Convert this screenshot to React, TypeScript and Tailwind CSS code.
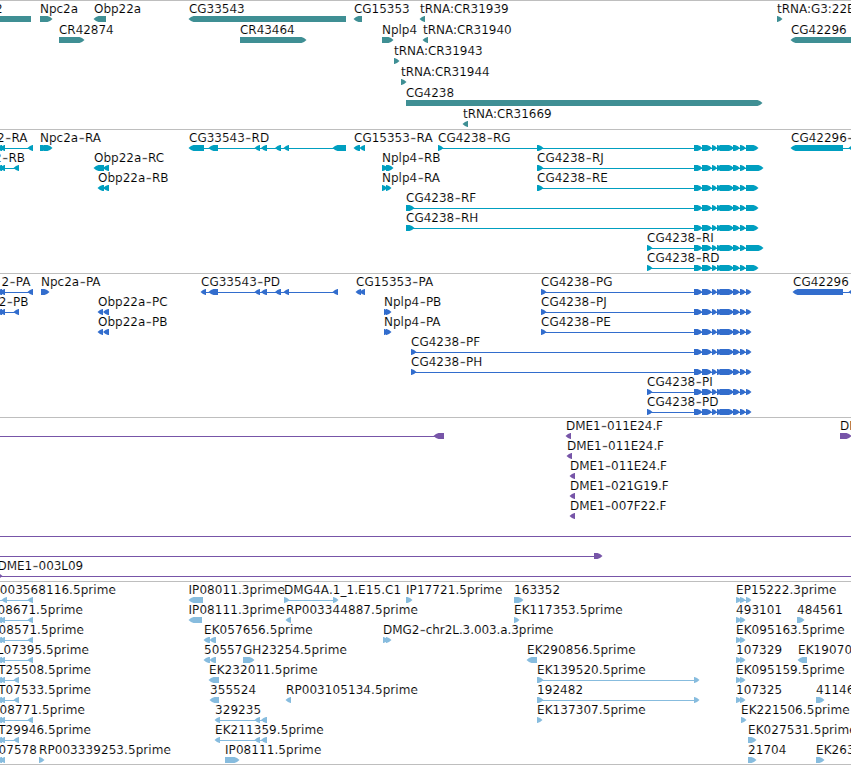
type Dir = "l" | "r";
type Span = [number, number];
// One labelled glyph: row in the track, label and its x, strand, exon blocks and connector line.
type Feature = {
  row: number;
  t?: string;
  x?: number;
  end?: boolean;
  d?: Dir;
  s?: Span[];
  line?: Span;
};
type TrackData = {
  top: number;
  height: number;
  first: number;
  pitch: number;
  color: string;
  spacing: number;
  features: Feature[];
};

const head: Span[] = [[694, 702.5], [702, 712], [712, 717], [717, 721], [719.5, 734], [733, 740], [740, 746]];
const utrShort: Span[] = [...head, [746, 758.5]];
const utrLong: Span[] = [...head, [746, 763.5]];
const coding: Span[] = [...head, [746, 751.5]];

const genes: Feature[] = [
  { row: 0, t: "2", x: 2.5, end: true, d: "r" },
  { row: 0, s: [[-10, 31]] },
  { row: 0, t: "Npc2a", x: 40, d: "r", s: [[40, 52.5]] },
  { row: 0, t: "Obp22a", x: 94, d: "l", s: [[93.5, 106]] },
  { row: 0, t: "CG33543", x: 189, d: "l", s: [[188.5, 346]] },
  { row: 0, t: "CG15353", x: 354, d: "l", s: [[353.5, 362]] },
  { row: 0, t: "tRNA:CR31939", x: 420, d: "l", s: [[419.5, 425]] },
  { row: 0, t: "tRNA:G3:22E", x: 777, d: "r", s: [[777, 782.5]] },
  { row: 1, t: "CR42874", x: 59, d: "r", s: [[59, 84.5]] },
  { row: 1, t: "CR43464", x: 240, d: "r", s: [[240, 306.5]] },
  { row: 1, t: "Nplp4", x: 382, d: "r", s: [[382, 393.5]] },
  { row: 1, t: "tRNA:CR31940", x: 423, d: "l", s: [[422.5, 428]] },
  { row: 1, t: "CG42296", x: 791, d: "l", s: [[790.5, 870]] },
  { row: 2, t: "tRNA:CR31943", x: 394, d: "r", s: [[394, 399.5]] },
  { row: 3, t: "tRNA:CR31944", x: 401, d: "r", s: [[401, 406.5]] },
  { row: 4, t: "CG4238", x: 406, d: "r", s: [[406, 762.5]] },
  { row: 5, t: "tRNA:CR31669", x: 463, d: "l", s: [[462.5, 468]] },
];

const transcripts: Feature[] = [
  { row: 0, t: "2-RA", x: 27.5, end: true, d: "l", line: [0, 31], s: [[-4, 2], [0, 5], [27.5, 33]] },
  { row: 0, t: "Npc2a-RA", x: 40, d: "r", s: [[40, 48], [44, 52.5]] },
  { row: 0, t: "CG33543-RD", x: 189, d: "l", line: [195, 340], s: [[188.5, 204], [208.5, 218], [254.5, 260], [261, 267], [275, 281], [283.5, 289], [332.5, 346]] },
  { row: 0, t: "CG15353-RA", x: 354, d: "l", s: [[353.5, 360], [359.5, 365]] },
  { row: 0, t: "CG4238-RG", x: 438, d: "r", line: [438, 750], s: [[438, 443.5], [537, 543.5], ...utrShort] },
  { row: 0, t: "CG42296-", x: 791, d: "l", line: [840, 851], s: [[790.5, 843], [848.5, 856]] },
  { row: 1, t: "2-RB", x: 25, end: true, d: "l", line: [0, 17], s: [[-4, 2], [0, 5], [13.5, 19]] },
  { row: 1, t: "Obp22a-RC", x: 94, d: "l", s: [[93.5, 104], [103, 109]] },
  { row: 1, t: "Nplp4-RB", x: 382, d: "r", s: [[382, 388], [386, 393.5]] },
  { row: 1, t: "CG4238-RJ", x: 537, d: "r", line: [537, 750], s: [[537, 543.5], ...utrLong] },
  { row: 2, t: "Obp22a-RB", x: 98, d: "l", s: [[97.5, 104], [103, 109]] },
  { row: 2, t: "Nplp4-RA", x: 382, d: "r", s: [[382, 387], [386, 391.5]] },
  { row: 2, t: "CG4238-RE", x: 537, d: "r", line: [537, 750], s: [[537, 543.5], ...utrShort] },
  { row: 3, t: "CG4238-RF", x: 406, d: "r", line: [406, 750], s: [[406, 414.5], ...utrShort] },
  { row: 4, t: "CG4238-RH", x: 406, d: "r", line: [406, 750], s: [[406, 414.5], ...utrShort] },
  { row: 5, t: "CG4238-RI", x: 647, d: "r", line: [647, 750], s: [[647, 652.5], ...utrLong] },
  { row: 6, t: "CG4238-RD", x: 647, d: "r", line: [647, 750], s: [[647, 652.5], ...utrShort] },
];

const proteins: Feature[] = [
  { row: 0, t: "2-PA", x: 30.5, end: true, d: "l", line: [0, 31], s: [[-4, 2], [0, 5], [27.5, 33]] },
  { row: 0, t: "Npc2a-PA", x: 41, d: "r", s: [[41, 49.5]] },
  { row: 0, t: "CG33543-PD", x: 201, d: "l", line: [204, 335], s: [[200.5, 206], [208.5, 218], [254.5, 260], [261, 267], [275, 281], [283.5, 289], [332.5, 338]] },
  { row: 0, t: "CG15353-PA", x: 356, d: "l", s: [[355.5, 361], [359.5, 365]] },
  { row: 0, t: "CG4238-PG", x: 541, d: "r", line: [541, 748], s: [[541, 546.5], ...coding] },
  { row: 0, t: "CG42296", x: 793, d: "l", line: [840, 851], s: [[792.5, 843], [848.5, 856]] },
  { row: 1, t: "2-PB", x: 28.5, end: true, d: "l", line: [0, 17], s: [[-4, 2], [0, 5], [13.5, 19]] },
  { row: 1, t: "Obp22a-PC", x: 98, d: "l", s: [[97.5, 103], [103, 109]] },
  { row: 1, t: "Nplp4-PB", x: 384, d: "r", s: [[384, 388], [386, 391.5]] },
  { row: 1, t: "CG4238-PJ", x: 541, d: "r", line: [541, 748], s: [[541, 546.5], ...coding] },
  { row: 2, t: "Obp22a-PB", x: 98, d: "l", s: [[97.5, 103], [103, 109]] },
  { row: 2, t: "Nplp4-PA", x: 384, d: "r", s: [[384, 388], [386, 391.5]] },
  { row: 2, t: "CG4238-PE", x: 541, d: "r", line: [541, 748], s: [[541, 546.5], ...coding] },
  { row: 3, t: "CG4238-PF", x: 411, d: "r", line: [411, 748], s: [[411, 416.5], ...coding] },
  { row: 4, t: "CG4238-PH", x: 411, d: "r", line: [411, 748], s: [[411, 416.5], ...coding] },
  { row: 5, t: "CG4238-PI", x: 647, d: "r", line: [647, 748], s: [[647, 652.5], ...coding] },
  { row: 6, t: "CG4238-PD", x: 647, d: "r", line: [647, 748], s: [[647, 652.5], ...coding] },
];

const clones: Feature[] = [
  { row: 0, d: "l", line: [0, 440], s: [[433.5, 444]] },
  { row: 0, t: "DME1-011E24.F", x: 566, d: "l", s: [[565.5, 571]] },
  { row: 0, t: "DME1", x: 840, d: "r", s: [[840, 851.5]] },
  { row: 1, t: "DME1-011E24.F", x: 567, d: "l", s: [[566.5, 572]] },
  { row: 2, t: "DME1-011E24.F", x: 570, d: "l", s: [[569.5, 575]] },
  { row: 3, t: "DME1-021G19.F", x: 570, d: "l", s: [[569.5, 575]] },
  { row: 4, t: "DME1-007F22.F", x: 570, d: "l", s: [[569.5, 575]] },
  { row: 5, line: [0, 851] },
  { row: 6, d: "r", line: [0, 598], s: [[594, 602.5]] },
  { row: 7, t: "DME1-003L09", x: 83, end: true, d: "r", line: [0, 851], s: [[-3, 2.5]] },
];

const pair: Span[] = [[736, 741.5], [740, 745.5]];
const edge: Span[] = [[-4, 2], [0, 5]];
const ests: Feature[] = [
  { row: 0, t: "003568116.5prime", x: 116, end: true, d: "l", line: [0, 31], s: [[1.5, 7], [27.5, 33]] },
  { row: 0, t: "IP08011.3prime", x: 188.5, d: "l", s: [[188.5, 203]] },
  { row: 0, t: "DMG4A.1_1.E15.C1", x: 284, d: "r", line: [284, 336], s: [[284, 289.5], [333, 338.5]] },
  { row: 0, t: "IP17721.5prime", x: 406, d: "r", s: [[406, 412.5]] },
  { row: 0, t: "163352", x: 514, d: "r", s: [[514, 523.5]] },
  { row: 0, t: "EP15222.3prime", x: 736, d: "r", s: [...pair, [746, 751.5]], line: [736, 748] },
  { row: 1, t: "08671.5prime", x: 83, end: true, d: "l", line: [0, 31], s: [...edge, [27.5, 33]] },
  { row: 1, t: "IP08111.3prime", x: 188.5, d: "l", s: [[188.5, 202]] },
  { row: 1, t: "RP003344887.5prime", x: 286, d: "l", s: [[285.5, 291]] },
  { row: 1, t: "EK117353.5prime", x: 514, d: "r", s: [[514, 519.5]] },
  { row: 1, t: "493101", x: 736, d: "r", s: pair },
  { row: 1, t: "484561", x: 797, d: "r", s: [[797, 804.5]] },
  { row: 2, t: "08571.5prime", x: 84, end: true, d: "l", line: [0, 31], s: [...edge, [27.5, 33]] },
  { row: 2, t: "EK057656.5prime", x: 204, d: "l", s: [[203.5, 210], [209.5, 216]] },
  { row: 2, t: "DMG2-chr2L.3.003.a.3prime", x: 383, d: "r", s: [[383, 388], [386, 391.5]] },
  { row: 2, t: "EK095163.5prime", x: 736, d: "r", s: pair },
  { row: 3, t: "L07395.5prime", x: 89, end: true, d: "l", line: [0, 31], s: [...edge, [27.5, 33]] },
  { row: 3, t: "50557", x: 204, d: "l", s: [[203.5, 210], [209.5, 216]] },
  { row: 3, t: "GH23254.5prime", x: 243, d: "r", s: [[243, 254.5]] },
  { row: 3, t: "EK290856.5prime", x: 527, d: "l", s: [[526.5, 537]] },
  { row: 3, t: "107329", x: 736, d: "r", s: pair },
  { row: 3, t: "EK19070", x: 798, d: "l", s: [[797.5, 807]] },
  { row: 4, t: "T25508.5prime", x: 91, end: true, d: "l", line: [0, 17], s: [...edge, [13.5, 19]] },
  { row: 4, t: "EK232011.5prime", x: 209, d: "l", s: [[208.5, 219]] },
  { row: 4, t: "EK139520.5prime", x: 537, d: "r", line: [537, 696], s: [[537, 543.5], [694, 699.5]] },
  { row: 4, t: "EK095159.5prime", x: 736, d: "r", s: pair },
  { row: 5, t: "T07533.5prime", x: 91, end: true, d: "l", line: [0, 17], s: [...edge, [13.5, 19]] },
  { row: 5, t: "355524", x: 210, d: "l", s: [[209.5, 219]] },
  { row: 5, t: "RP003105134.5prime", x: 286, d: "l", s: [[285.5, 291]] },
  { row: 5, t: "192482", x: 537, d: "r", line: [537, 696], s: [[537, 543.5], [694, 699.5]] },
  { row: 5, t: "107325", x: 736, d: "r", s: pair },
  { row: 5, t: "41146", x: 816, d: "r", s: [[816, 824.5]] },
  { row: 6, t: "08771.5prime", x: 85, end: true, d: "l", line: [0, 31], s: [...edge, [27.5, 33]] },
  { row: 6, t: "329235", x: 215, d: "l", line: [217, 265], s: [[214.5, 220], [254.5, 260], [261, 267]] },
  { row: 6, t: "EK137307.5prime", x: 537, d: "r", s: [[537, 542.5]] },
  { row: 6, t: "EK221506.5prime", x: 741, d: "r", s: [[741, 746.5]] },
  { row: 7, t: "T29946.5prime", x: 91, end: true, d: "l", line: [0, 17], s: [...edge, [13.5, 19]] },
  { row: 7, t: "EK211359.5prime", x: 215, d: "l", line: [217, 265], s: [[214.5, 220], [254.5, 260], [261, 267]] },
  { row: 7, t: "EK027531.5prime", x: 748, d: "r", s: [[748, 756.5]] },
  { row: 8, t: "07578", x: 37, end: true, d: "l", s: edge },
  { row: 8, t: "RP003339253.5prime", x: 39, d: "r", s: [[39, 44.5]] },
  { row: 8, t: "IP08111.5prime", x: 225, d: "r", s: [[225, 239.5]] },
  { row: 8, t: "21704", x: 748, d: "r", s: [[748, 756.5]] },
  { row: 8, t: "EK263", x: 816, d: "r", s: [[816, 824.5]] },
];

const tracks: TrackData[] = [
  { top: 1, height: 128, first: 16, pitch: 21, color: "#3f8f94", spacing: -0.03, features: genes },
  { top: 130, height: 143, first: 145, pitch: 20, color: "#009fc0", spacing: 0, features: transcripts },
  { top: 274, height: 143, first: 289, pitch: 20, color: "#326dcd", spacing: 0, features: proteins },
  { top: 418, height: 163, first: 433, pitch: 20, color: "#7755a8", spacing: -0.08, features: clones },
  { top: 582, height: 182, first: 597, pitch: 20, color: "#87bcde", spacing: 0.07, features: ests },
];

// Outline of an exon block with a slightly rounded arrow head on its strand side.
function blockPoints([a, b]: Span, y: number, d?: Dir) {
  if (d === "r") {
    const n = Math.max(a, b - 5.5);
    return `${a},${y} ${n + 0.5},${y} ${n + 3},${y + 1} ${b},${y + 3} ${n + 3},${y + 5} ${n + 0.5},${y + 6} ${a},${y + 6}`;
  }
  if (d === "l") {
    const n = Math.min(b, a + 5.5);
    return `${b},${y} ${n - 0.5},${y} ${n - 3},${y + 1} ${a},${y + 3} ${n - 3},${y + 5} ${n - 0.5},${y + 6} ${b},${y + 6}`;
  }
  return `${a},${y} ${b},${y} ${b},${y + 6} ${a},${y + 6}`;
}

// Labels carry a long, thin dash between the name and its suffix.
function LabelText({ text }: { text: string }) {
  const at = text.indexOf("-");
  if (at < 0) return <>{text}</>;
  return (
    <>
      {text.slice(0, at)}
      <tspan dy={1.4} dx={0.2} className="stroke-[0.5px] text-[18px]">-</tspan>
      <tspan dy={-1.4}>{text.slice(at + 1)}</tspan>
    </>
  );
}

function Track({ track }: { track: TrackData }) {
  const { top, height, first, pitch, color, spacing, features } = track;
  return (
    <section className="border-t border-[#bebebe]">
      <svg className="block" width={851} height={height} viewBox={`0 ${top} 851 ${height}`}>
        {features.map((f, i) => {
          const y = first + f.row * pitch;
          return (
            <g key={i}>
              {f.line && <rect x={f.line[0]} y={y + 3} width={f.line[1] - f.line[0]} height={1} fill={color} />}
              {f.s?.map((s, j) => <polygon key={j} points={blockPoints(s, y, f.d)} fill={color} />)}
              {f.t && (
                <text
                  x={f.x}
                  y={y - 3}
                  textAnchor={f.end ? "end" : "start"}
                  letterSpacing={f.t.length > 20 ? -0.08 : spacing}
                  className="fill-black stroke-white stroke-[0.12px] font-['DejaVu_Sans',sans-serif] text-[12px]"
                >
                  <LabelText text={f.t} />
                </text>
              )}
            </g>
          );
        })}
      </svg>
    </section>
  );
}

export default function App() {
  return (
    <main className="flex h-[765px] w-[851px] flex-col overflow-hidden border-b border-[#bebebe] bg-white">
      {tracks.map((t) => (
        <Track key={t.top} track={t} />
      ))}
    </main>
  );
}
